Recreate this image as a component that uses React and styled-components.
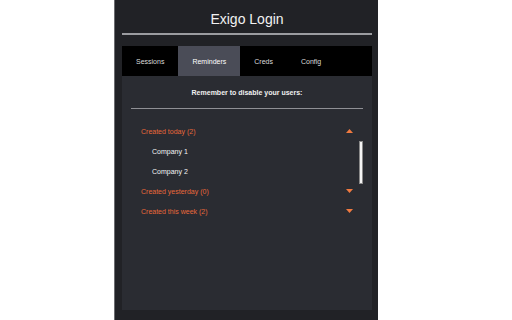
import { useState } from "react";
import styled, { createGlobalStyle } from "styled-components";

const Global = createGlobalStyle`
  html, body {
    margin: 0;
    background: #ffffff;
    font-family: "Liberation Sans", Arial, sans-serif;
  }
`;

const Panel = styled.div`
  margin-left: 114px;
  width: 264px;
  height: 320px;
  box-sizing: border-box;
  padding: 0 6px 10px 7px;
  background: #212226;
  border-left: 1px solid #6b6c70;
  display: flex;
  flex-direction: column;
`;

const Title = styled.h1`
  margin: 0;
  height: 35px;
  box-sizing: border-box;
  padding-top: 5px;
  display: flex;
  align-items: center;
  justify-content: center;
  font-size: 14px;
  font-weight: 400;
  color: #f2f2f2;
  border-bottom: 2px solid #9b9ca0;
`;

const TabBar = styled.div`
  margin-top: 11px;
  height: 30px;
  background: #000000;
  display: flex;
`;

const Tab = styled.button`
  border: 0;
  padding: 0 14px;
  font-family: inherit;
  font-size: 7px;
  color: ${(p) => (p.$active ? "#ffffff" : "#dcdcdc")};
  background: ${(p) => (p.$active ? "#4a4c57" : "transparent")};
  cursor: pointer;
`;

const Content = styled.div`
  flex: 1;
  background: #2a2c32;
  padding: 0 9px;
`;

const Notice = styled.p`
  margin: 0;
  height: 32px;
  display: flex;
  align-items: center;
  justify-content: center;
  font-size: 7px;
  font-weight: 700;
  color: #f0f0f0;
  border-bottom: 1px solid #8f9095;
`;

const Groups = styled.div`
  padding-top: 12px;
`;

const GroupHead = styled.div`
  height: 20px;
  padding: 0 10px;
  display: flex;
  align-items: center;
  justify-content: space-between;
  font-size: 7px;
  color: #e8683a;
  cursor: pointer;
`;

const Arrow = styled.svg`
  width: 7px;
  height: 4px;
  fill: #f07a40;
`;

const Items = styled.div`
  position: relative;
`;

const Item = styled.div`
  height: 20px;
  padding-left: 21px;
  display: flex;
  align-items: center;
  font-size: 7px;
  color: #f4f4f4;
`;

const Thumb = styled.div`
  position: absolute;
  right: 0;
  top: 0;
  width: 2px;
  height: 41px;
  background: #f4f4f4;
  border: 1px solid #8a8a8a;
`;

const groups = [
  { name: "Created today", items: ["Company 1", "Company 2"], count: 2 },
  { name: "Created yesterday", items: [], count: 0 },
  { name: "Created this week", items: ["Company 3", "Company 4"], count: 2 },
];

function Caret({ up }) {
  return (
    <Arrow viewBox="0 0 7 4">
      {up ? <polygon points="3.5,0 7,4 0,4" /> : <polygon points="0,0 7,0 3.5,4" />}
    </Arrow>
  );
}

export default function App() {
  const [tab, setTab] = useState("Reminders");
  const [open, setOpen] = useState(0);
  return (
    <>
      <Global />
      <Panel>
        <Title>Exigo Login</Title>
        <TabBar>
          {["Sessions", "Reminders", "Creds", "Config"].map((t) => (
            <Tab key={t} $active={t === tab} onClick={() => setTab(t)}>
              {t}
            </Tab>
          ))}
        </TabBar>
        <Content>
          <Notice>Remember to disable your users:</Notice>
          <Groups>
            {groups.map((g, i) => (
              <div key={g.name}>
                <GroupHead onClick={() => setOpen(open === i ? -1 : i)}>
                  <span>
                    {g.name} ({g.count})
                  </span>
                  <Caret up={open === i} />
                </GroupHead>
                {open === i && (
                  <Items>
                    {g.items.map((c) => (
                      <Item key={c}>{c}</Item>
                    ))}
                    <Thumb />
                  </Items>
                )}
              </div>
            ))}
          </Groups>
        </Content>
      </Panel>
    </>
  );
}
